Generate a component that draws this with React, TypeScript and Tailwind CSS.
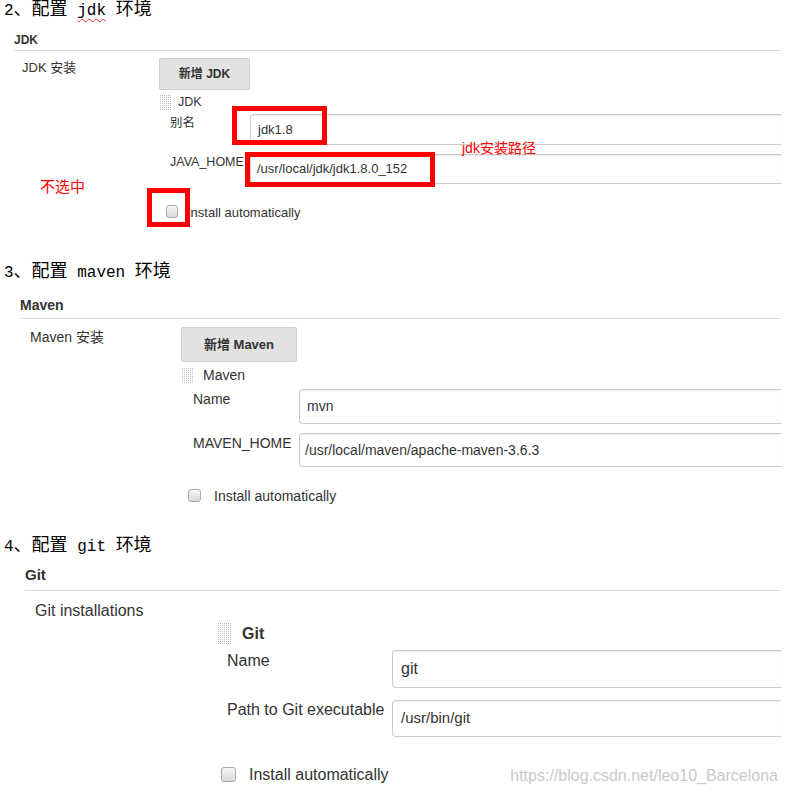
import React from "react";

function Grip({ w, h }: { w: number; h: number }) {
  const dots: React.ReactNode[] = [];
  for (let y = 0; y < h; y += 2) {
    for (let x = 0; x < w; x += 2) {
      dots.push(<rect key={`${x}-${y}`} x={x} y={y} width="1" height="1" fill="#bdbdbd" />);
    }
  }
  return (
    <svg width={w} height={h} className="shrink-0">
      {dots}
    </svg>
  );
}

function Checkbox({ size }: { size: string }) {
  return (
    <div
      className={`${size} shrink-0 rounded-[3px] border border-[#a9a9a9] bg-gradient-to-b from-[#f7f7f7] to-[#d9d9d9]`}
    />
  );
}

function Field({
  value,
  className,
}: {
  value: string;
  className: string;
}) {
  return (
    <div
      className={`flex flex-1 items-center rounded-l-[4px] border border-r-0 border-[#cccccc] bg-white shadow-[inset_0_1px_1px_rgba(0,0,0,0.07)] ${className}`}
    >
      {value}
    </div>
  );
}

const heading =
  "h-[20px] pl-[4px] text-[18px] leading-[20px] text-black font-['Liberation_Mono','Noto_Sans_CJK_SC',monospace]";

// latin part of the headings is narrower than the CJK glyphs
function Latin({ children, spell }: { children: React.ReactNode; spell?: boolean }) {
  return (
    <span
      className={`text-[16px] ${spell ? "underline decoration-red-500 decoration-wavy decoration-1 underline-offset-[3px]" : ""}`}
    >
      {children}
    </span>
  );
}

export default function App() {
  return (
    <div className="relative h-[795px] w-[787px] overflow-hidden bg-white text-[#333] font-['Liberation_Sans','Noto_Sans_CJK_SC',sans-serif]">
      {/* JDK */}
      <section className="h-[262px]">
        <h2 className={heading}>
          <Latin>2</Latin>、配置<Latin> </Latin>
          <Latin spell>jdk</Latin>
          <Latin> </Latin>环境
        </h2>
        <div className="ml-[14px] mr-[6px]">
          <div className="mt-[13px] border-b border-[#e0e0e0] pb-[3px] text-[12px] font-bold leading-[14px]">
            JDK
          </div>
          <div className="flex">
            <div className="w-[145px] shrink-0 pl-[8px] pt-[9px] text-[13px] leading-[16px]">
              JDK 安装
            </div>
            <div className="flex-1 pt-[7px]">
              <button className="h-[32px] w-[91px] rounded-[2px] border border-[#cfcfcf] bg-[#e2e2e2] text-[12px] font-bold text-[#333]">
                新增 JDK
              </button>
              <div className="mt-[4px] flex h-[16px] items-center gap-[7px] pl-[1px] text-[12.5px]">
                <Grip w={11} h={15} />
                <span>JDK</span>
              </div>
              <div className="mt-[4px] flex">
                <div className="w-[91px] shrink-0 pl-[11px] pt-[1px] text-[12.5px] leading-[16px]">
                  别名
                </div>
                <Field value="jdk1.8" className="h-[31px] pl-[7px] text-[13px]" />
              </div>
              <div className="mt-[9px] flex">
                <div className="w-[91px] shrink-0 whitespace-nowrap pl-[11px] text-[12.5px] leading-[16px]">
                  JAVA_HOME
                </div>
                <Field
                  value="/usr/local/jdk/jdk1.8.0_152"
                  className="relative h-[30px] pl-[6px] text-[13px]"
                />
              </div>
              <div className="mt-[16px] flex items-center gap-[9px] pl-[7px] text-[13px]">
                <Checkbox size="h-[13px] w-[12px]" />
                <span className="pt-[3px]">Install automatically</span>
              </div>
            </div>
          </div>
        </div>
      </section>

      {/* Maven */}
      <section className="h-[274px]">
        <h2 className={heading}>
          <Latin>3</Latin>、配置<Latin> maven </Latin>环境
        </h2>
        <div className="ml-[20px] mr-[6px]">
          <div className="mt-[15px] border-b border-[#e0e0e0] pb-[5px] text-[14px] font-bold leading-[16px]">
            Maven
          </div>
          <div className="flex">
            <div className="w-[161px] shrink-0 pl-[10px] pt-[10px] text-[14px] leading-[16px]">
              Maven 安装
            </div>
            <div className="flex-1 pt-[8px]">
              <button className="h-[35px] w-[116px] rounded-[2px] border border-[#cfcfcf] bg-[#e2e2e2] text-[13px] font-bold text-[#333]">
                新增 Maven
              </button>
              <div className="mt-[5px] flex h-[17px] items-center gap-[10px] pl-[1px] text-[14px]">
                <Grip w={11} h={16} />
                <span>Maven</span>
              </div>
              <div className="mt-[5px] flex">
                <div className="w-[118px] shrink-0 pl-[12px] pt-[2px] text-[14px] leading-[16px]">
                  Name
                </div>
                <Field value="mvn" className="h-[35px] pl-[7px] text-[14px]" />
              </div>
              <div className="mt-[9px] flex">
                <div className="w-[118px] shrink-0 whitespace-nowrap pl-[12px] pt-[2px] text-[14px] leading-[16px]">
                  MAVEN_HOME
                </div>
                <Field
                  value="/usr/local/maven/apache-maven-3.6.3"
                  className="h-[34px] pl-[5px] text-[14px]"
                />
              </div>
              <div className="mt-[17px] flex items-center gap-[13px] pl-[7px] text-[14px]">
                <Checkbox size="h-[13px] w-[13px]" />
                <span className="pt-[2px]">Install automatically</span>
              </div>
            </div>
          </div>
        </div>
      </section>

      {/* Git */}
      <section>
        <h2 className={heading}>
          <Latin>4</Latin>、配置<Latin> git </Latin>环境
        </h2>
        <div className="ml-[25px] mr-[6px]">
          <div className="mt-[10px] border-b border-[#e0e0e0] pb-[6px] text-[15px] font-bold leading-[18px]">
            Git
          </div>
          <div className="flex items-start">
            <div className="w-[193px] shrink-0 pl-[10px] pt-[11px] text-[16px] leading-[18px]">
              Git installations
            </div>
            <div className="flex-1 pt-[32px]">
              <div className="flex h-[21px] items-center gap-[10px] text-[16px] font-bold">
                <Grip w={14} h={21} />
                <span>Git</span>
              </div>
              <div className="mt-[6px] flex">
                <div className="w-[174px] shrink-0 pl-[9px] pt-[2px] text-[16px] leading-[18px]">
                  Name
                </div>
                <Field value="git" className="h-[38px] pl-[8px] text-[16px]" />
              </div>
              <div className="mt-[12px] flex">
                <div className="w-[174px] shrink-0 whitespace-nowrap pl-[9px] pt-[1px] text-[16px] leading-[18px]">
                  Path to Git executable
                </div>
                <Field value="/usr/bin/git" className="h-[37px] pl-[8px] text-[15px]" />
              </div>
              <div className="mt-[24px] flex items-center gap-[13px] pl-[3px] text-[16px]">
                <Checkbox size="h-[15px] w-[15px]" />
                <span className="pt-[2px]">Install automatically</span>
              </div>
            </div>
          </div>
        </div>
      </section>

      {/* annotations */}
      <div className="absolute left-[232px] top-[106px] h-[39px] w-[95px] border-[5px] border-[#ff0000]" />
      <div className="absolute left-[245px] top-[152px] h-[35px] w-[190px] border-[5px] border-[#ff0000]" />
      <div className="absolute left-[147px] top-[188px] h-[39px] w-[43px] border-[5px] border-[#ff0000]" />
      <div className="absolute left-[462px] top-[140px] text-[14px] leading-[16px] text-[#ff0000]">
        jdk安装路径
      </div>
      <div className="absolute left-[40px] top-[179px] text-[15px] leading-[16px] text-[#ff0000]">
        不选中
      </div>
      <div className="absolute right-[9px] top-[767px] text-[16px] leading-[18px] text-[#c9c9c9]">
        https://blog.csdn.net/leo10_Barcelona
      </div>
    </div>
  );
}
